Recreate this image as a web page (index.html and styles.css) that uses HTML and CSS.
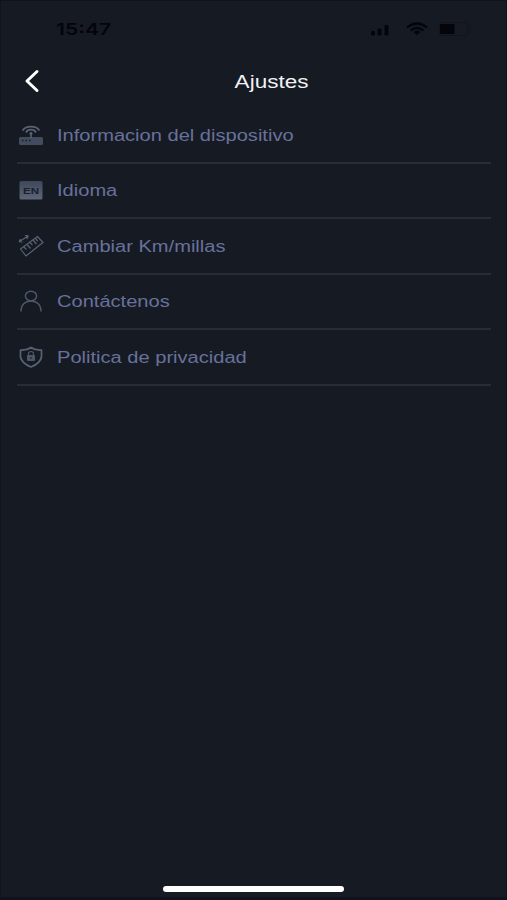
FILE: index.html
```
<!DOCTYPE html>
<html lang="es">
<head>
    <meta charset="UTF-8">
    <meta name="viewport" content="width=device-width, initial-scale=1.0">
    <title>Ajustes</title>
    <link rel="stylesheet" href="styles.css">
</head>
<body>

<div class="screen">
    <!-- Barra de estado -->
    <div class="status-bar">
        <span class="time">15:47</span>
        <svg class="status-icons" width="110" height="20" viewBox="0 0 110 20">
            <g fill="#03050b">
                <rect x="1" y="12" width="4" height="4.500" rx="1"/>
                <rect x="7.500" y="9.500" width="4" height="7" rx="1"/>
                <rect x="14.500" y="6" width="4" height="10.500" rx="1"/>
                <rect x="70" y="5" width="14.500" height="10" rx="1"/>
                <path d="M43.500 13q4-3 7 0l-3.500 3z"/>
            </g>
            <g fill="none" stroke="#03050b">
                <path d="M37 8.500q10-8 20 0M40.500 11.500q6.500-5 13 0" stroke-width="2.200"/>
                <rect x="69" y="3.500" width="29" height="13" rx="3" stroke-width="1" opacity=".2"/>
                <path d="M100 8v4" opacity=".2"/>
            </g>
        </svg>
    </div>

    <!-- Cabecera -->
    <div class="header">
        <svg class="back" width="16" height="24" viewBox="0 0 16 24">
            <path d="M13 2.500L3 12l10 9.500" fill="none" stroke="#fff" stroke-width="3" stroke-linecap="round" stroke-linejoin="round"/>
        </svg>
        <h1><span class="title">Ajustes</span></h1>
    </div>

    <!-- Lista de opciones -->
    <ul class="settings">
        <li class="item">
            <svg class="icon" width="28" height="26" viewBox="0 0 28 26">
                <rect x="2" y="15" width="24" height="8" rx="1.500" fill="#434c5e"/>
                <path d="M5 18.500h1.500M8.500 18.500h1.500M12 18.500h1.500" stroke="#171b26" stroke-width="1.400"/>
                <path d="M14 11v5" stroke="#5a6477" stroke-width="1.500"/>
                <circle cx="14" cy="11.500" r="1.500" fill="#5a6477"/>
                <path d="M5.500 8.500a9.500 7 0 0 1 17 0M9 10.500a5.500 4.800 0 0 1 10 0" fill="none" stroke="#596274" stroke-width="1.800"/>
            </svg>
            <span class="label">Informacion del dispositivo</span>
        </li>
        <li class="item">
            <svg class="icon" width="28" height="26" viewBox="0 0 28 26">
                <defs>
                    <linearGradient id="tile" x1="0" y1="0" x2="0" y2="1">
                        <stop offset="0" stop-color="#3e485a"/>
                        <stop offset="1" stop-color="#5c6678"/>
                    </linearGradient>
                </defs>
                <rect x="2.500" y="4" width="23" height="18.500" rx="1.500" fill="url(#tile)"/>
                <text class="lang" x="14" y="16.800" text-anchor="middle" textLength="16" lengthAdjust="spacingAndGlyphs">EN</text>
            </svg>
            <span class="label">Idioma</span>
        </li>
        <li class="item">
            <svg class="icon" width="28" height="26" viewBox="0 0 28 26">
                <g fill="none" stroke="#596274" stroke-width="1.200" stroke-linejoin="round">
                    <path d="M3.500 16L20.500 3.500l5.500 6L9 23z"/>
                    <path d="M7 14l2.500 2.700M10 11.500l3.500 4M13 9.500l2.500 2.700M16 7l3.500 4M18.500 5.500l2.200 2.500"/>
                    <path d="M2.500 8.500L11 3M8 2.500l3.200.4-1.200 3M5.500 9l-3.200-.4L3.500 6"/>
                </g>
            </svg>
            <span class="label">Cambiar Km/millas</span>
        </li>
        <li class="item">
            <svg class="icon" width="28" height="26" viewBox="0 0 28 26">
                <g fill="none" stroke="#4e576a" stroke-width="1.400" stroke-linecap="round">
                    <ellipse cx="14" cy="8" rx="5.600" ry="4.800"/>
                    <path d="M4 23c0-6 4-10 10-10s10 4 10 10"/>
                </g>
            </svg>
            <span class="label">Contáctenos</span>
        </li>
        <li class="item">
            <svg class="icon" width="28" height="26" viewBox="0 0 28 26">
                <path d="M14 3.500q4 3 10.500 2.500v7q-1 6-10.500 10Q4.500 19 3.500 13V6Q10 6.500 14 3.500z" fill="none" stroke="#596274" stroke-width="1.700" stroke-linejoin="round"/>
                <rect x="10" y="11" width="8" height="6" rx="1" fill="#4e576a"/>
                <path d="M11.500 11.500v-1.800a2.500 2.200 0 0 1 5 0v1.800" fill="none" stroke="#4e576a" stroke-width="1.200"/>
                <path d="M14 13v2" stroke="#171b26"/>
            </svg>
            <span class="label">Politica de privacidad</span>
        </li>
    </ul>

    <div class="home-bar"></div>
</div>

</body>
</html>
```
FILE: styles.css
```
* {
    box-sizing: border-box;
}
body {
    margin: 0;
    background-color: #161a23;
    font-family: 'Liberation Sans', Arial, sans-serif;
}
.screen {
    display: flex;
    flex-direction: column;
    width: 507px;
    height: 900px;
    border: 1px solid #11121c;
    border-bottom-width: 3px;
    background-color: #161a23;
}
.status-bar {
    display: flex;
    justify-content: space-between;
    align-items: center;
    height: 54px;
    padding: 1px 26px 0 55px;
}
.time {
    color: #03050b;
    font-family: 'Inter', 'Liberation Sans', sans-serif;
    font-size: 16.5px;
    font-weight: 600;
    transform: scaleX(1.28);
    transform-origin: left;
}
.header {
    display: flex;
    align-items: center;
    height: 52px;
    padding: 0 23px;
}
.header h1 {
    flex: 1;
    margin: 2px 0 0 3px;
    color: #f1f2f5;
    font-size: 18px;
    font-weight: 400;
    text-align: center;
}
.title, .label {
    display: inline-block;
    white-space: nowrap;
    transform: scaleX(1.25);
}
/* El h1 empieza tras la flecha, se centra un poco a la derecha */
.title {
    margin-left: 18px;
}
.settings {
    flex: 1;
    margin: 0;
    padding: 1px 15px 0 16px;
    list-style: none;
}
.item {
    display: flex;
    align-items: center;
    height: 55.5px;
    border-bottom: 2px solid #282c38;
}
.icon {
    margin-right: 12px;
}
.label {
    padding-top: 2px;
    color: #68719b;
    font-size: 16px;
    transform: scaleX(1.255);
    transform-origin: left;
}
.lang {
    fill: #1b202c;
    font-size: 9.5px;
    font-weight: 700;
}
.home-bar {
    align-self: center;
    width: 181px;
    height: 6px;
    margin-bottom: 5px;
    border-radius: 3px;
    background-color: #fff;
}
```
